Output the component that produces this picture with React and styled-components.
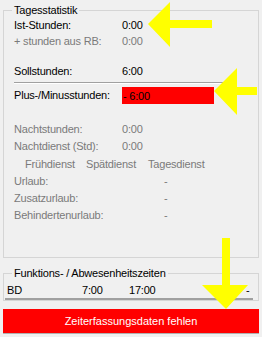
import React from "react";
import styled, { createGlobalStyle } from "styled-components";

const Global = createGlobalStyle`
  html, body { margin: 0; padding: 0; background: #f0f0f0; }
  * { box-sizing: border-box; }
`;

const Window = styled.div`
  position: relative;
  width: 262px;
  height: 337px;
  overflow: hidden;
  background: #f0f0f0;
  font-family: "Liberation Sans", Arial, sans-serif;
  font-size: 11px;
  letter-spacing: -0.2px;
  color: #000;
  display: flex;
  flex-direction: column;
  padding-top: 4px;
`;

const Group = styled.fieldset`
  margin: ${(p) => p.$mt || 0}px 0 0 3px;
  width: 256px;
  height: ${(p) => p.$h}px;
  padding: 0;
  border: 1px solid #d5d5d5;
  border-radius: 0;
  min-width: 0;
`;

const Legend = styled.legend`
  margin-left: 8px;
  padding: 0 2px;
  line-height: 12px;
  font-size: 11px;
  color: #000;
`;

const Row = styled.div`
  display: grid;
  grid-template-columns: 108px 1fr;
  height: ${(p) => p.$h || 16}px;
  line-height: ${(p) => p.$h || 16}px;
  margin-top: ${(p) => p.$mt || 0}px;
  padding-left: 10px;
  color: ${(p) => (p.$dim ? "#7a7a7a" : "#000")};
  white-space: nowrap;
`;

const Value = styled.span`
  padding-left: ${(p) => p.$indent || 0}px;
`;

const Divider = styled.div`
  margin: 3px 0 0 10px;
  width: 210px;
  height: 2px;
  border-top: 1px solid #a0a0a0;
  border-bottom: 1px solid #ffffff;
`;

const AlertValue = styled.span`
  width: 92px;
  height: 17px;
  background: #ff0000;
  padding-left: 1px;
  line-height: 18px;
  color: #000;
`;

const ShiftHeader = styled.div`
  display: grid;
  grid-template-columns: 61px 62px auto;
  padding-left: 21px;
  margin-top: ${(p) => p.$mt || 0}px;
  height: 16px;
  line-height: 16px;
  color: #7a7a7a;
  white-space: nowrap;
`;

const ListRow = styled.div`
  display: grid;
  grid-template-columns: 75px 47px 117px auto;
  margin: 3px 5px 0 1px;
  padding-left: 2px;
  height: 18px;
  line-height: 16px;
  border-bottom: 2px solid #a0a0a0;
  white-space: nowrap;
`;

const AlertBar = styled.div`
  margin: 8px 0 0 3px;
  width: 256px;
  height: 25px;
  background: #ff0000;
  color: #ffffff;
  text-align: center;
  line-height: 25px;
  letter-spacing: 0;
  border-bottom: 1px solid #b0b0b0;
`;

const Overlay = styled.svg`
  position: absolute;
  left: 0;
  top: 0;
  pointer-events: none;
`;

const statRows = [
  { label: "Ist-Stunden:", value: "0:00", mt: 1 },
  { label: "+ stunden aus RB:", value: "0:00", dim: true },
  { label: "Sollstunden:", value: "6:00", mt: 14 },
];

const nightRows = [
  { label: "Nachtstunden:", value: "0:00", mt: 17, h: 17 },
  { label: "Nachtdienst (Std):", value: "0:00", mt: 0, h: 17 },
];

const leaveRows = [
  { label: "Urlaub:", mt: 1, h: 17 },
  { label: "Zusatzurlaub:", mt: 0, h: 17 },
  { label: "Behindertenurlaub:", mt: 0, h: 16 },
];

export default function App() {
  return (
    <>
      <Global />
      <Window>
        <Group $h={254}>
          <Legend>Tagesstatistik</Legend>
          {statRows.map((r) => (
            <Row key={r.label} $mt={r.mt} $dim={r.dim}>
              <span>{r.label}</span>
              <Value>{r.value}</Value>
            </Row>
          ))}
          <Divider />
          <Row $mt={3} $h={17}>
            <span>Plus-/Minusstunden:</span>
            <AlertValue>- 6:00</AlertValue>
          </Row>
          {nightRows.map((r) => (
            <Row key={r.label} $mt={r.mt} $h={r.h} $dim>
              <span>{r.label}</span>
              <Value>{r.value}</Value>
            </Row>
          ))}
          <ShiftHeader $mt={1}>
            <span>Frühdienst</span>
            <span>Spätdienst</span>
            <span>Tagesdienst</span>
          </ShiftHeader>
          {leaveRows.map((r) => (
            <Row key={r.label} $mt={r.mt} $h={r.h} $dim>
              <span>{r.label}</span>
              <Value $indent={42}>-</Value>
            </Row>
          ))}
        </Group>
        <Group $mt={9}>
          <Legend>Funktions- / Abwesenheitszeiten</Legend>
          <ListRow>
            <span>BD</span>
            <span>7:00</span>
            <span>17:00</span>
            <span>-</span>
          </ListRow>
        </Group>
        <AlertBar>Zeiterfassungsdaten fehlen</AlertBar>
        <Overlay width="262" height="337" viewBox="0 0 262 337">
          <polygon
            fill="#ffff00"
            points="148,24 170,2 170,20 212,20 212,28 170,28 170,47"
          />
          <polygon
            fill="#ffff00"
            points="214,91 237,68 237,87 257,87 257,95 237,95 237,115"
          />
          <polygon
            fill="#ffff00"
            points="222,238 230,238 230,285 248,285 226,309 202,285 222,285"
          />
        </Overlay>
      </Window>
    </>
  );
}
